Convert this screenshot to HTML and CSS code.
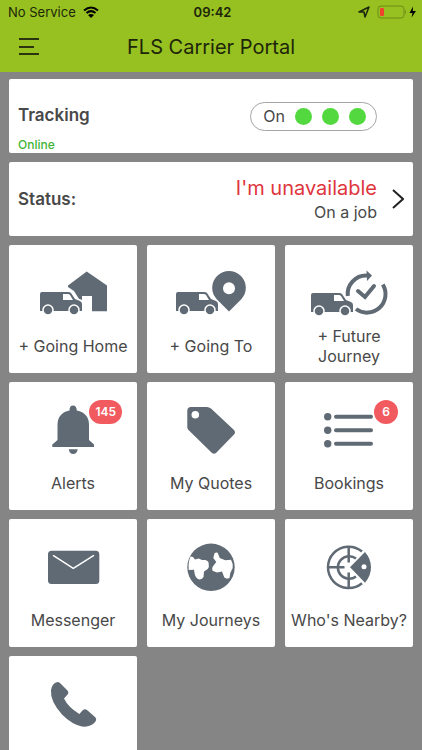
FILE: index.html
```html
<!DOCTYPE html>
<html lang="en">
<head>
	<meta charset="utf-8">
	<meta name="viewport" content="width=device-width, initial-scale=1">
	<title>FLS Carrier Portal</title>
	<link rel="stylesheet" href="styles.css">
</head>
<body>
	<svg class="defs" aria-hidden="true">
		<symbol id="van" viewBox="0 0 44 24" overflow="visible">
			<path d="M3 1H29Q31 1 32 2L36 8L41 10Q43 11 43 13V20H1V3Q1 1 3 1Z"/>
			<path class="cut" d="M24 3H29Q30 3 31 4L34 9H24Z"/>
			<circle class="ring" cx="9" cy="19" r="5"/>
			<circle class="ring" cx="35" cy="19" r="5"/>
		</symbol>
	</svg>

	<div class="app">
		<header class="header">
			<div class="statusbar">
				<div class="carrier">
					<span>No Service</span>
					<svg width="16" height="12" viewBox="0 0 16 12">
						<path class="wifi" d="M1 4.5Q8 -1.5 15 4.5M3.500 7Q8 3.300 12.500 7"/>
						<path d="M8 12L5 9Q8 6.800 11 9Z"/>
					</svg>
				</div>
				<time class="clock">09:42</time>
				<div class="power">
					<svg width="12" height="12" viewBox="0 0 12 12"><path class="arrow" d="M1 6L11 1L7 11L6 6Z"/></svg>
					<svg width="40" height="14" viewBox="0 0 40 14">
						<rect class="battery" x="1" y="1" width="26" height="12" rx="3"/>
						<rect class="charge" x="3" y="3" width="4" height="8" rx="1"/>
						<path class="nub" d="M28 5Q30 7 28 9Z"/>
						<path d="M36 1.500L32.500 8H35.500L34.500 12.500L39 6H35.800Z"/>
					</svg>
				</div>
			</div>
			<div class="navbar">
				<button class="menu" type="button" aria-label="Menu">
					<svg width="22" height="18" viewBox="0 0 22 18"><path d="M1 1H21M1 9H16M1 16H21"/></svg>
				</button>
				<h1 class="title">FLS Carrier Portal</h1>
			</div>
		</header>

		<main class="content">
			<section class="card tracking">
				<div>
					<h2 class="card-title">Tracking</h2>
					<p class="online">Online</p>
				</div>
				<button class="toggle" type="button">
					<span>On</span>
					<i class="dot"></i><i class="dot"></i><i class="dot"></i>
				</button>
			</section>

			<a class="card status" href="#">
				<h2 class="card-title">Status:</h2>
				<div class="state">
					<p class="availability">I'm unavailable</p>
					<p class="reason">On a job</p>
				</div>
				<svg class="chevron" width="12" height="20" viewBox="0 0 12 20"><path d="M1 1L11 10L1 19"/></svg>
			</a>

			<nav class="tiles">
				<a class="tile" href="#">
					<svg class="icon" viewBox="0 0 96 52">
						<path d="M61.700 5.500L82 19.500V45.300H67V30H57V34L54 33L49 25L43 21V19.500Z"/>
						<path class="gap" d="M44 25L50 33L57 36V47"/>
						<use href="#van" x="14" y="25" width="44" height="24"/>
					</svg>
					<span class="label">+ Going Home</span>
				</a>
				<a class="tile" href="#">
					<svg class="icon" viewBox="0 0 96 52">
						<use href="#van" x="12" y="25" width="44" height="24"/>
						<path d="M66 45.500L53.500 33A16.800 16.800 0 1 1 78.500 33Z"/>
						<circle class="cut" cx="66" cy="22.300" r="6"/>
					</svg>
					<span class="label">+ Going To</span>
				</a>
				<a class="tile" href="#">
					<svg class="icon" viewBox="0 0 96 52">
						<use href="#van" x="9" y="26" width="44" height="24"/>
						<path class="line w4" d="M46.800 30A18.500 18.500 0 0 1 66 9.500M81.800 18.500A18.500 18.500 0 0 1 55 43"/>
						<path d="M65.500 4.500L71 9.500L66 15Z"/>
						<path class="line w4 round" d="M57 25L64 31L73 20"/>
					</svg>
					<span class="label">+ Future Journey</span>
				</a>
				<a class="tile" href="#">
					<svg class="icon" viewBox="0 0 96 52">
						<path d="M48 2.500Q51.500 2.500 51.800 7.500Q64 10 64 22V37L69 41.500V44H27.300V41.500L32.500 37V22Q32.500 10 44.500 7.500Q44.500 2.500 48 2.500Z"/>
						<path d="M43.700 46.300H52.700Q52 51 48.200 51Q44.500 51 43.700 46.300Z"/>
					</svg>
					<span class="label">Alerts</span>
					<span class="badge">145</span>
				</a>
				<a class="tile" href="#">
					<svg class="icon" viewBox="0 0 96 52">
						<path d="M28 4H44Q46 4 48 5.500L71 27Q73 29.300 71 31.500L53 50Q51 51.500 49 50L25.500 27Q24.300 26 24.300 24V8Q24.300 4 28 4Z"/>
						<circle class="cut" cx="32.300" cy="11.700" r="3.800"/>
					</svg>
					<span class="label">My Quotes</span>
				</a>
				<a class="tile" href="#">
					<svg class="icon" viewBox="0 0 96 52">
						<circle cx="26.700" cy="13.700" r="3.700"/>
						<circle cx="26.700" cy="27.300" r="3.700"/>
						<circle cx="26.700" cy="40.800" r="3.700"/>
						<path class="line w4 round" d="M35 13.700H70M35 27.300H70M35 40.800H70"/>
					</svg>
					<span class="label">Bookings</span>
					<span class="badge">6</span>
				</a>
				<a class="tile" href="#">
					<svg class="icon" viewBox="0 0 96 52">
						<rect x="23" y="10.700" width="51.300" height="33.300" rx="3.500"/>
						<path class="flap" d="M28.500 15.700L48.300 28.300L68.500 15.700"/>
					</svg>
					<span class="label">Messenger</span>
				</a>
				<a class="tile" href="#">
					<svg class="icon" viewBox="0 0 96 52">
						<circle cx="48" cy="27.300" r="23.700"/>
						<path class="cut" d="M27.500 16.500L30 17L32 19.500L35.700 18.500L39 20L42.500 20Q46 21 45.700 24Q46.500 27 44.700 29L41 31.500L40.500 37Q39 40 35.700 39.300Q32.500 38 31.700 34L31 29.700L25.700 30Q25 22 27.500 16.500Z"/>
						<path class="cut" d="M51.500 13.300Q53 12 54.700 12.700L56.700 18L62.300 20.300L68 19.700Q70.500 24 69.700 28L67.300 33L66.500 38L64 38.700L61.300 37.500L59 31.500L54 32.500L49.500 30.700Q48.500 28 50 26.300L53.300 22L50.300 18Z"/>
					</svg>
					<span class="label">My Journeys</span>
				</a>
				<a class="tile" href="#">
					<svg class="icon" viewBox="0 0 96 52">
						<path class="line w3" d="M61 11.500A20.700 20.700 0 1 0 61 43.200"/>
						<path class="line w3" d="M55 18.500A11.300 11.300 0 1 0 55 36.500"/>
						<path class="line w3" d="M47.700 7V22.500M47.700 32.500V48M27 27.300H43.500"/>
						<path d="M49 27.300L64 12Q70 19 70 27.300Q70 36 64 42.700Z"/>
						<circle class="cut" cx="63" cy="26.700" r="2.500"/>
					</svg>
					<span class="label">Who's Nearby?</span>
				</a>
				<a class="tile" href="#" aria-label="Phone">
					<svg class="icon" viewBox="0 0 96 52">
						<path d="M31 5.500Q33 4.500 35 6L42.500 13.500Q44 15 43 17L39 21.500Q43 30 54.300 37L58 33Q60 31.500 62 33L70 40Q72 42 70.500 44.500Q66 50.500 57 49.500Q47 47.500 37 37.500Q25 24 26 13Q27 7 31 5.500Z"/>
					</svg>
				</a>
			</nav>
		</main>
	</div>
</body>
</html>
```

FILE: styles.css
```css
* {
	box-sizing: border-box;
}

body,
h1,
h2,
p {
	margin: 0;
}

body {
	font-family: Inter, "Liberation Sans", sans-serif;
	color: #484848;
	background: #858585;
}

a {
	color: inherit;
	text-decoration: none;
}

button {
	font: inherit;
	color: inherit;
	background: none;
	border: 0;
	padding: 0;
}

svg {
	display: block;
}

.defs {
	position: absolute;
	width: 0;
	height: 0;
}

.app {
	display: flex;
	flex-direction: column;
	height: 100vh;
}

/* header */
.header {
	flex: none;
	background: #97c121;
	color: #1d260a;
}

.statusbar {
	display: grid;
	grid-template-columns: 1fr auto 1fr;
	align-items: center;
	height: 24px;
	padding: 0 5px 0 8px;
	font-size: 13px;
}

.carrier,
.power {
	display: flex;
	align-items: center;
	gap: 7px;
}

.power {
	justify-content: flex-end;
}

.clock {
	font-weight: 600;
}

.wifi {
	fill: none;
	stroke: #000;
	stroke-width: 2;
}

.arrow {
	fill: none;
	stroke: #1d260a;
	stroke-width: 1.5;
	stroke-linejoin: round;
}

.battery {
	fill: none;
	stroke: #6c8b18;
}

.nub {
	fill: #6c8b18;
}

.charge {
	fill: #f0432c;
}

.navbar {
	display: grid;
	grid-template-columns: 40px 1fr 40px;
	align-items: center;
	height: 48px;
	padding: 0 18px 2px;
}

.menu path {
	fill: none;
	stroke: #2a340f;
	stroke-width: 2;
}

.title {
	font-size: 20px;
	font-weight: 400;
	text-align: center;
	white-space: nowrap;
}

/* cards */
.content {
	flex: 1;
	display: flex;
	flex-direction: column;
	gap: 9px;
	min-height: 0;
	padding: 7px 9px;
	overflow-y: auto;
	scrollbar-width: none;
}

.card,
.tile {
	background: #fff;
	border-radius: 2px;
}

.card {
	flex: none;
	display: flex;
	align-items: center;
	height: 74px;
	padding: 0 9px;
}

.card-title {
	font-size: 17px;
	line-height: 24px;
	font-weight: 600;
}

.tracking {
	justify-content: space-between;
	padding-right: 36px;
}

.tracking .card-title {
	padding-top: 24px;
}

.online {
	padding-top: 10px;
	font-size: 12px;
	line-height: 16px;
	font-weight: 500;
	color: #3fb535;
}

.toggle {
	display: flex;
	align-items: center;
	gap: 10px;
	height: 29px;
	padding: 0 10px 0 12px;
	border: 1px solid #a5a5a9;
	border-radius: 15px;
	font-size: 16px;
}

.dot {
	width: 17px;
	height: 17px;
	border-radius: 50%;
	background: #53d83f;
}

.status {
	gap: 15px;
}

.state {
	flex: 1;
	text-align: right;
}

.availability {
	font-size: 20px;
	line-height: 26px;
	color: #e0353d;
}

.reason {
	font-size: 16px;
	line-height: 22px;
}

.chevron path {
	fill: none;
	stroke: #222;
	stroke-width: 2;
}

/* tiles */
.tiles {
	display: grid;
	grid-template-columns: repeat(3, 1fr);
	gap: 9px 10px;
}

.tile {
	position: relative;
	display: flex;
	flex-direction: column;
	align-items: center;
	gap: 8px;
	height: 128px;
	padding-top: 21px;
}

.icon {
	flex: none;
	width: 96px;
	height: 52px;
	fill: #606a74;
}

.label {
	display: flex;
	align-items: center;
	height: 40px;
	padding: 0 5px;
	font-size: 16px;
	line-height: 20px;
	text-align: center;
}

.badge {
	position: absolute;
	top: 18px;
	right: 15px;
	min-width: 24px;
	padding: 0 6px;
	border-radius: 12px;
	background: #f15b60;
	color: #fff;
	font-size: 12px;
	line-height: 24px;
	font-weight: 600;
	text-align: center;
}

.cut {
	fill: #fff;
}

.ring {
	stroke: #fff;
	stroke-width: 1.5;
}

.gap {
	fill: none;
	stroke: #fff;
	stroke-width: 3;
}

.line {
	fill: none;
	stroke: #606a74;
}

.w3 {
	stroke-width: 2.5;
}

.w4 {
	stroke-width: 4;
}

.round {
	stroke-linecap: round;
}

.flap {
	fill: none;
	stroke: #fff;
	stroke-width: 1.5;
	stroke-linecap: round;
}
```
